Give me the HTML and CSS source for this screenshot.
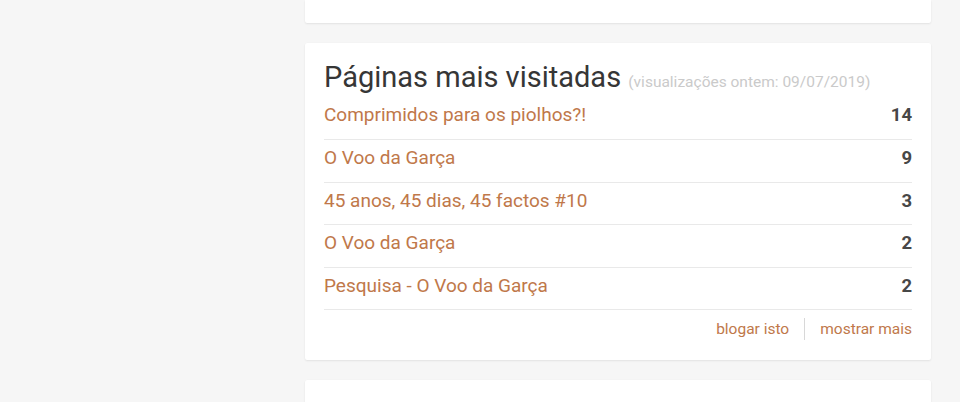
FILE: index.html
```html
<!DOCTYPE html>
<html lang="pt">
<head>
<meta charset="utf-8">
<link rel="stylesheet" href="styles.css">
</head>
<body>
<div class="page">
  <aside class="side"></aside>
  <main class="main">
    <section class="card card-top"></section>
    <section class="card popular">
      <h3 class="title">Páginas mais visitadas <span class="sub">(visualizações ontem: 09/07/2019)</span></h3>
      <ul class="list">
        <li class="row"><a class="link">Comprimidos para os piolhos?!</a><span class="count">14</span></li>
        <li class="row"><a class="link">O Voo da Garça</a><span class="count">9</span></li>
        <li class="row"><a class="link">45 anos, 45 dias, 45 factos #10</a><span class="count">3</span></li>
        <li class="row"><a class="link">O Voo da Garça</a><span class="count">2</span></li>
        <li class="row"><a class="link">Pesquisa - O Voo da Garça</a><span class="count">2</span></li>
      </ul>
      <div class="actions">
        <a class="action">blogar isto</a>
        <span class="sep"></span>
        <a class="action">mostrar mais</a>
      </div>
    </section>
    <section class="card card-bottom"></section>
  </main>
</div>
</body>
</html>
```

FILE: styles.css
```css
* { box-sizing: border-box; }
html, body {
  margin: 0;
  padding: 0;
  background: #f6f6f6;
  font-family: Roboto, "Noto Sans", sans-serif;
  overflow: hidden;
}
.page {
  display: flex;
  height: 402px;
}
.side {
  width: 305px;
  flex: none;
}
.main {
  width: 626px;
  flex: none;
  display: flex;
  flex-direction: column;
  gap: 20px;
}
.card {
  background: #fff;
  border-radius: 2px;
  box-shadow: 0 1px 2px rgba(0,0,0,0.08), 0 0 1px rgba(0,0,0,0.04);
  flex: none;
}
.card-top {
  height: 23px;
  border-radius: 0 0 2px 2px;
}
.popular {
  height: 316.5px;
  padding: 17px 19px 0 19px;
}
.title {
  margin: 0 0 3px 0;
  height: 34px;
  font-weight: 400;
  font-size: 29px;
  line-height: 34px;
  color: #363636;
  white-space: nowrap;
}
.sub {
  font-size: 15.5px;
  line-height: 1;
  color: #cacaca;
}
.list {
  list-style: none;
  margin: 0;
  padding: 0;
}
.row {
  display: flex;
  justify-content: space-between;
  align-items: flex-start;
  height: 42.5px;
  padding-top: 6px;
  line-height: 24px;
  border-bottom: 1.5px solid #e9e9e9;
  font-size: 19px;
}
.row:first-child {
  height: 43px;
}
.link {
  color: #c0784a;
}
.count {
  color: #474747;
  font-weight: 700;
  font-size: 18.5px;
}
.actions {
  display: flex;
  justify-content: flex-end;
  align-items: center;
  gap: 15px;
  height: 22px;
  margin-top: 8px;
  font-size: 15.5px;
  line-height: 22px;
}
.action {
  color: #c0784a;
}
.sep {
  width: 1px;
  height: 22px;
  background: #d8d8d8;
}
.card-bottom {
  height: 40px;
}
```
